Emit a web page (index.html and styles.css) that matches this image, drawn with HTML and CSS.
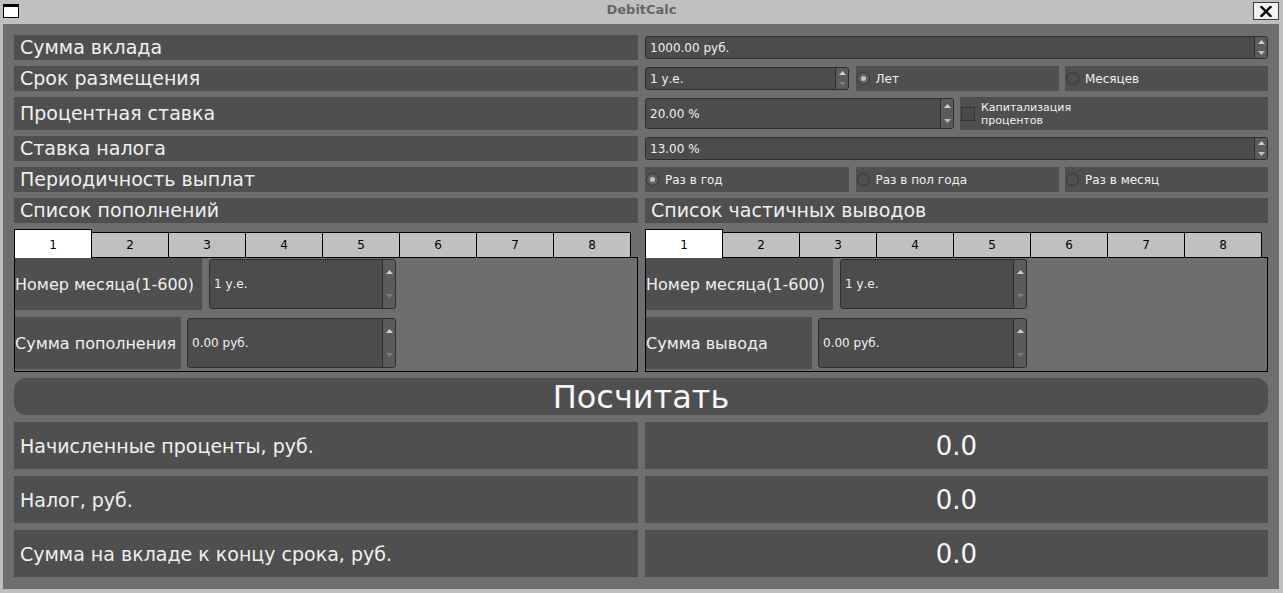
FILE: index.html
```html
<!DOCTYPE html>
<html lang="ru">
<head>
<meta charset="utf-8">
<title>DebitCalc</title>
<link rel="stylesheet" href="styles.css">
</head>
<body>
<div class="titlebar">
  <div class="app-icon"></div>
  <div class="title">DebitCalc</div>
  <div class="close"><svg width="12" height="11" viewBox="0 0 12 11"><path d="M1.5 1 L10.5 10 M10.5 1 L1.5 10" stroke="#000" stroke-width="2.4" stroke-linecap="square"/></svg></div>
</div>
<div class="window">
  <div class="form">
    <div class="label">Сумма вклада</div>
    <div class="cell-spin">
      <div class="spin"><div class="val">1000.00 руб.</div><div class="btns"><span class="arr"><svg width="7" height="4"><polygon points="0,4 3.5,0 7,4" fill="#cfcfcf"/></svg></span><span class="arr"><svg width="7" height="4"><polygon points="0,0 3.5,4 7,0" fill="#bdbdbd"/></svg></span></div></div>
    </div>

    <div class="label">Срок размещения</div>
    <div class="cols3">
      <div class="cell-spin">
        <div class="spin"><div class="val">1 у.е.</div><div class="btns"><span class="arr"><svg width="7" height="4"><polygon points="0,4 3.5,0 7,4" fill="#cfcfcf"/></svg></span><span class="arr"><svg width="7" height="4"><polygon points="0,0 3.5,4 7,0" fill="#7c7c7c"/></svg></span></div></div>
      </div>
      <div class="opt"><span class="radio on"></span>Лет</div>
      <div class="opt"><span class="radio"></span>Месяцев</div>
    </div>

    <div class="label">Процентная ставка</div>
    <div class="cols2">
      <div class="cell-spin">
        <div class="spin"><div class="val">20.00 %</div><div class="btns"><span class="arr"><svg width="7" height="4"><polygon points="0,4 3.5,0 7,4" fill="#cfcfcf"/></svg></span><span class="arr"><svg width="7" height="4"><polygon points="0,0 3.5,4 7,0" fill="#bdbdbd"/></svg></span></div></div>
      </div>
      <div class="opt"><span class="box"></span><span class="small">Капитализация<br>процентов</span></div>
    </div>

    <div class="label">Ставка налога</div>
    <div class="cell-spin">
      <div class="spin"><div class="val">13.00 %</div><div class="btns"><span class="arr"><svg width="7" height="4"><polygon points="0,4 3.5,0 7,4" fill="#cfcfcf"/></svg></span><span class="arr"><svg width="7" height="4"><polygon points="0,0 3.5,4 7,0" fill="#bdbdbd"/></svg></span></div></div>
    </div>

    <div class="label">Периодичность выплат</div>
    <div class="cols3">
      <div class="opt"><span class="radio on"></span>Раз в год</div>
      <div class="opt"><span class="radio"></span>Раз в пол года</div>
      <div class="opt"><span class="radio"></span>Раз в месяц</div>
    </div>

    <div class="label">Список пополнений</div>
    <div class="label">Список частичных выводов</div>

    <div class="tabs">
      <div class="tabbar">
        <div class="tab active">1</div><div class="tab">2</div><div class="tab">3</div><div class="tab">4</div><div class="tab">5</div><div class="tab">6</div><div class="tab">7</div><div class="tab">8</div><div class="tabfill"></div>
      </div>
      <div class="tabpage">
        <div class="trow">
          <div class="tlabel w-month">Номер месяца(1-600)</div>
          <div class="cell-spin grow">
            <div class="spin"><div class="val">1 у.е.</div><div class="btns"><span class="arr"><svg width="7" height="4"><polygon points="0,4 3.5,0 7,4" fill="#cfcfcf"/></svg></span><span class="arr"><svg width="7" height="4"><polygon points="0,0 3.5,4 7,0" fill="#7c7c7c"/></svg></span></div></div>
          </div>
        </div>
        <div class="trow tight">
          <div class="tlabel w-sum">Сумма пополнения</div>
          <div class="cell-spin grow">
            <div class="spin"><div class="val">0.00 руб.</div><div class="btns"><span class="arr"><svg width="7" height="4"><polygon points="0,4 3.5,0 7,4" fill="#cfcfcf"/></svg></span><span class="arr"><svg width="7" height="4"><polygon points="0,0 3.5,4 7,0" fill="#7c7c7c"/></svg></span></div></div>
          </div>
        </div>
      </div>
    </div>

    <div class="tabs">
      <div class="tabbar">
        <div class="tab active">1</div><div class="tab">2</div><div class="tab">3</div><div class="tab">4</div><div class="tab">5</div><div class="tab">6</div><div class="tab">7</div><div class="tab">8</div><div class="tabfill"></div>
      </div>
      <div class="tabpage">
        <div class="trow">
          <div class="tlabel w-month">Номер месяца(1-600)</div>
          <div class="cell-spin grow">
            <div class="spin"><div class="val">1 у.е.</div><div class="btns"><span class="arr"><svg width="7" height="4"><polygon points="0,4 3.5,0 7,4" fill="#cfcfcf"/></svg></span><span class="arr"><svg width="7" height="4"><polygon points="0,0 3.5,4 7,0" fill="#7c7c7c"/></svg></span></div></div>
          </div>
        </div>
        <div class="trow tight">
          <div class="tlabel w-sum">Сумма вывода</div>
          <div class="cell-spin grow">
            <div class="spin"><div class="val">0.00 руб.</div><div class="btns"><span class="arr"><svg width="7" height="4"><polygon points="0,4 3.5,0 7,4" fill="#cfcfcf"/></svg></span><span class="arr"><svg width="7" height="4"><polygon points="0,0 3.5,4 7,0" fill="#7c7c7c"/></svg></span></div></div>
          </div>
        </div>
      </div>
    </div>
  </div>

  <div class="calc">Посчитать</div>

  <div class="results">
    <div class="label">Начисленные проценты, руб.</div>
    <div class="value">0.0</div>
    <div class="label">Налог, руб.</div>
    <div class="value">0.0</div>
    <div class="label">Сумма на вкладе к концу срока, руб.</div>
    <div class="value">0.0</div>
  </div>
</div>
</body>
</html>
```

FILE: styles.css
```css
* { box-sizing: border-box; }

body {
  margin: 0;
  width: 1283px;
  height: 593px;
  overflow: hidden;
  background: #c0c0c0;
  font-family: "DejaVu Sans", "Noto Sans", sans-serif;
  color: #f0f0f0;
}

.titlebar {
  height: 24px;
  display: grid;
  grid-template-columns: 1fr auto 1fr;
  align-items: start;
}

.app-icon {
  width: 16px;
  height: 14px;
  margin: 4px 0 0 3px;
  background: #fff;
  border: 1px solid #000;
  border-top-width: 3px;
}

.title {
  font-weight: bold;
  font-size: 13px;
  line-height: 20px;
  color: #666666;
}

.close {
  justify-self: end;
  width: 26px;
  height: 18px;
  margin: 2px 4px 0 0;
  background: #f2f2f2;
  border: 1px solid #3c3c3c;
  display: flex;
  align-items: center;
  justify-content: center;
}

.window {
  margin: 0 4px 0 3px;
  height: 565px;
  padding: 11px 11px 12px 11px;
  background: #6e6e6e;
}

.form {
  display: grid;
  grid-template-columns: 624px 623px;
  grid-template-rows: 25px 25px 33px 25px 25px 25px 143px;
  column-gap: 7px;
  row-gap: 6px;
}

.label {
  background: #4f4f4f;
  font-size: 19px;
  padding-left: 6px;
  display: flex;
  align-items: center;
  white-space: nowrap;
}

.form .label { padding-bottom: 2px; }

.cols3 {
  display: grid;
  grid-template-columns: 204px 203px 203px;
  column-gap: 6.5px;
}

.cols2 {
  display: grid;
  grid-template-columns: 309px 308px;
  column-gap: 6px;
}

.cell-spin {
  padding: 1px 0;
  display: flex;
}

.cell-spin.grow { flex: 1; }

.spin {
  flex: 1;
  display: flex;
  background: #4c4c4c;
  border: 1px solid #2e2e2e;
  border-radius: 3px;
  overflow: hidden;
}

.val {
  flex: 1;
  display: flex;
  align-items: center;
  padding-left: 4px;
  font-size: 12px;
  white-space: nowrap;
}

.btns {
  width: 13px;
  display: flex;
  flex-direction: column;
  background: #5b5b5b;
  border-left: 1px solid #2e2e2e;
}

.arr {
  flex: 1;
  display: flex;
  align-items: center;
  justify-content: center;
}

.arr svg { display: block; }

.opt {
  background: #4f4f4f;
  display: flex;
  align-items: center;
  gap: 6px;
  font-size: 12px;
  white-space: nowrap;
}

.radio {
  width: 13px;
  height: 13px;
  margin-left: 1px;
  border-radius: 50%;
  border: 1px solid #363636;
  display: flex;
  align-items: center;
  justify-content: center;
}

.radio.on { background: #5f5f5f; }

.radio.on::after {
  content: "";
  width: 5px;
  height: 5px;
  border-radius: 50%;
  background: #c4c4c4;
}

.box {
  width: 14px;
  height: 14px;
  margin-left: 1px;
  border: 1px solid #363636;
  background: #4a4a4a;
}

.small {
  font-size: 11px;
  line-height: 13px;
}

.tabs {
  display: flex;
  flex-direction: column;
}

.tabbar {
  height: 29px;
  display: flex;
  align-items: flex-end;
}

.tab {
  width: 78px;
  height: 26px;
  margin-left: -1px;
  background: #c0c0c0;
  border: 1px solid #000;
  color: #000;
  font-size: 12px;
  display: flex;
  align-items: center;
  justify-content: center;
}

.tab:first-child { margin-left: 0; }

.tab.active {
  height: 29px;
  background: #fff;
  border-bottom: none;
  padding-top: 1px;
}

.tabfill {
  flex: 1;
  border-bottom: 1px solid #000;
}

.tabpage {
  height: 114px;
  border: 1px solid #000;
  border-top: none;
  display: flex;
  flex-direction: column;
  gap: 7px;
}

.trow {
  width: 381px;
  height: 52px;
  display: flex;
  gap: 7px;
}

.trow.tight { gap: 6px; }

.tlabel {
  background: #4f4f4f;
  font-size: 16px;
  display: flex;
  align-items: center;
  white-space: nowrap;
}

.w-month { width: 187px; }
.w-sum { width: 166px; }

.calc {
  margin-top: 6px;
  height: 37px;
  background: #4f4f4f;
  border-radius: 12px;
  font-size: 32px;
  display: flex;
  align-items: center;
  justify-content: center;
  color: #f6f6f6;
}

.results {
  margin-top: 7px;
  display: grid;
  grid-template-columns: 624px 623px;
  grid-template-rows: 47px 47px 47px;
  column-gap: 7px;
  row-gap: 7px;
}

.value {
  background: #4f4f4f;
  font-size: 26px;
  color: #f8f8f8;
  display: flex;
  align-items: center;
  justify-content: center;
}
```
